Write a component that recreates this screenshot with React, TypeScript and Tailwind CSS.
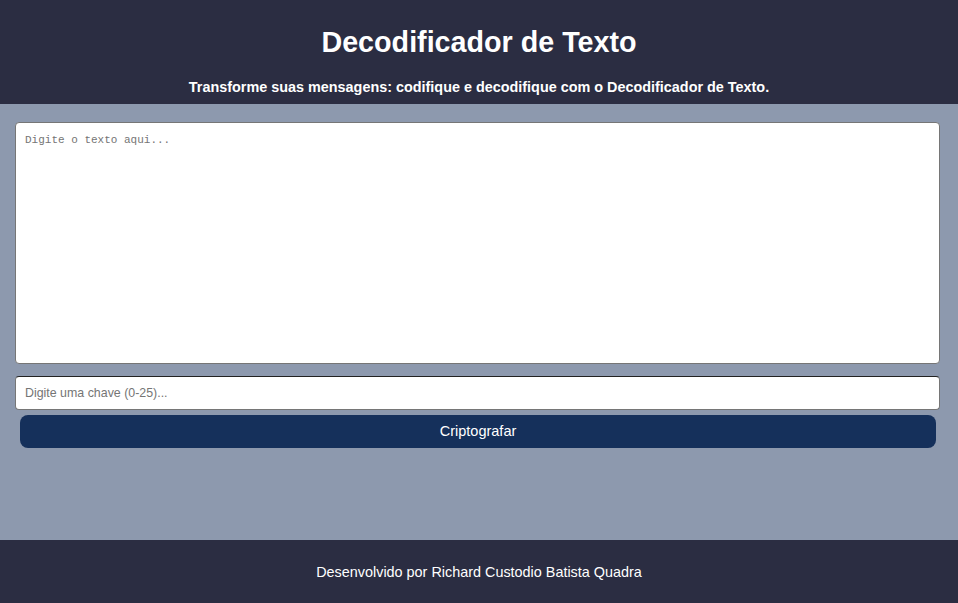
export default function App() {
  return (
    <div className="flex h-[603px] flex-col bg-[#8d99ae] font-['Liberation_Sans',Arial,sans-serif]">
      <header className="flex h-[104px] flex-col items-center bg-[#2b2d42] text-white">
        <h1 className="mt-[25px] text-[28.7px] font-bold leading-[34px]">Decodificador de Texto</h1>
        <p className="mt-[19px] text-[14.4px] font-bold leading-[18px]">
          Transforme suas mensagens: codifique e decodifique com o Decodificador de Texto.
        </p>
      </header>

      <main className="flex flex-1 flex-col pl-[15px] pr-[18px] pt-[18px]">
        <textarea
          placeholder="Digite o texto aqui..."
          className="h-[242px] w-full resize-none rounded-[4px] border border-[#767676] bg-white px-[9px] py-[10px] font-['Liberation_Mono',monospace] text-[11px] leading-[14px] text-black placeholder:text-[#757575] outline-none"
        />
        <input
          type="text"
          placeholder="Digite uma chave (0-25)..."
          className="mt-[12px] h-[34px] w-full rounded-[4px] border border-[#767676] border-t-[#222] bg-white px-[9px] text-[12.4px] text-black placeholder:text-[#757575] outline-none"
        />
        <button className="ml-[5px] mr-[4px] mt-[5px] h-[33px] rounded-[8px] bg-[#15305b] text-[14.5px] text-white">
          Criptografar
        </button>
      </main>

      <footer className="flex h-[63px] items-center justify-center bg-[#2b2d42] pt-[3px] text-[14.4px] text-white">
        Desenvolvido por Richard Custodio Batista Quadra
      </footer>
    </div>
  );
}
